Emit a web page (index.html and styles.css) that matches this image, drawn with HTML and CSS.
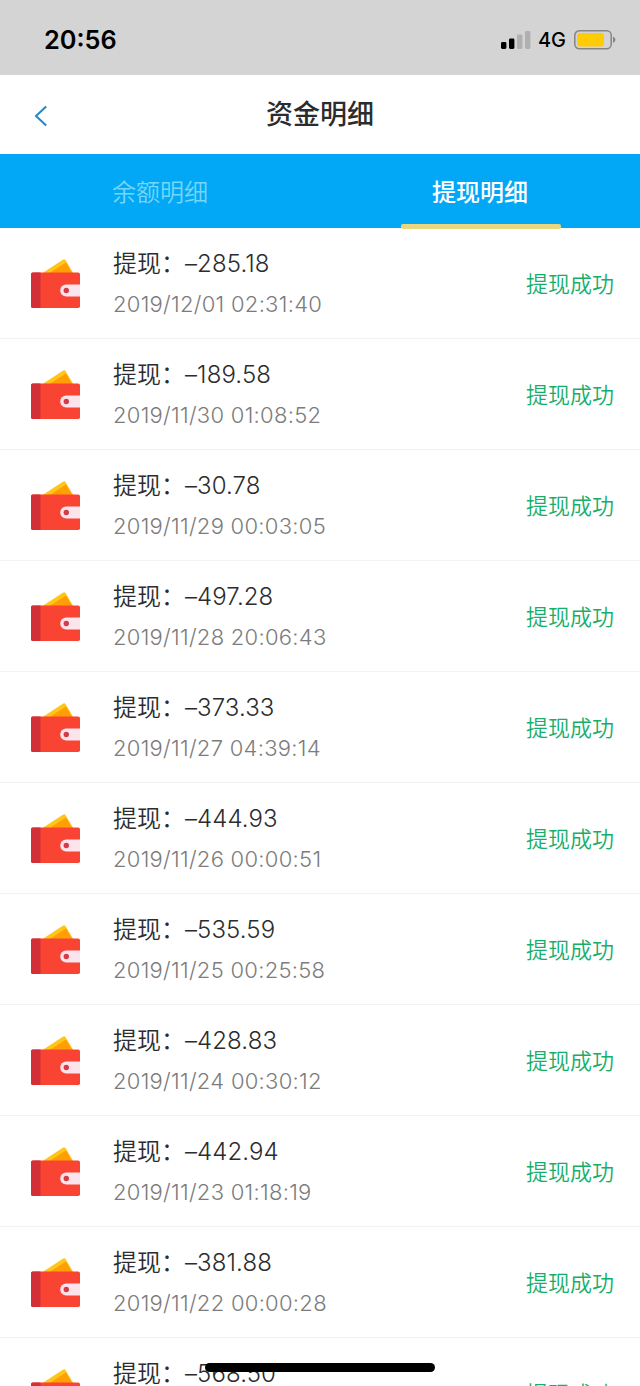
FILE: index.html
```html
<!DOCTYPE html>
<html lang="zh-CN">
<head>
  <meta charset="UTF-8"/>
  <meta name="viewport" content="width=device-width,initial-scale=1.0"/>
  <title>资金明细</title>
  <link rel="stylesheet" href="styles.css">
</head>
<body>
  <svg width="0" height="0" class="defs">
    <symbol id="wallet" viewBox="0 0 50 50">
      <path d="M10 15 L31.8 .7 Q33.6 -.4 34.8 1.4 L42.8 15 Z" fill="#ffc61a"/>
      <path d="M17 15 L35 3.4 L41.8 15 Z" fill="#ff9f05"/>
      <rect x="0" y="13.5" width="49" height="35.5" rx="1.8" fill="#f94434"/>
      <path d="M1.8 13.5 H9.5 V49 H1.8 Q0 49 0 47.2 V15.3 Q0 13.5 1.8 13.5 Z" fill="#d32f37"/>
      <path d="M49 25.5 H35.2 A6 6 0 0 0 35.2 37.5 H49 Z" fill="#fce4ec"/>
      <circle cx="35.3" cy="31.5" r="2.7" fill="#d63a45"/>
    </symbol>
  </svg>

  <div class="status-bar">
    <span class="time">20:56</span>
    <div class="status-icons">
      <svg class="signal" width="30" height="18" viewBox="0 0 30 18">
        <rect x="0" y="11" width="5.4" height="7" rx="1.4"/>
        <rect x="8" y="7.5" width="5.4" height="10.5" rx="1.4"/>
        <rect x="16" y="3.5" width="5.4" height="14.5" rx="1.4" fill="#b0b0b0"/>
        <rect x="24" y="0" width="5.4" height="18" rx="1.4" fill="#b0b0b0"/>
      </svg>
      <span class="network">4G</span>
      <svg class="battery" width="42" height="20" viewBox="0 0 42 20">
        <rect x=".8" y=".8" width="36.4" height="18" rx="4.5" fill="none" stroke="#858585" stroke-width="1.5"/>
        <rect x="3" y="3" width="27" height="13.6" rx="2.5" fill="#ffcb05"/>
        <path d="M39 6.5 Q41.5 7.8 41.5 9.8 T39 13.1 Z" fill="#858585"/>
      </svg>
    </div>
  </div>

  <div class="nav">
    <svg class="back" width="14" height="22" viewBox="0 0 14 22">
      <path d="M12.2 1.5 L2 11 L12.2 20.5" fill="none" stroke="#2486c8" stroke-width="2"/>
    </svg>
    <h1>资金明细</h1>
  </div>

  <div class="tabs">
    <div class="tab">余额明细</div>
    <div class="tab active">提现明细</div>
  </div>

  <div class="list" id="list"></div>

  <div class="home-bar"></div>

  <script>
    const records = [
      ['285.18', '2019/12/01 02:31:40'],
      ['189.58', '2019/11/30 01:08:52'],
      ['30.78', '2019/11/29 00:03:05'],
      ['497.28', '2019/11/28 20:06:43'],
      ['373.33', '2019/11/27 04:39:14'],
      ['444.93', '2019/11/26 00:00:51'],
      ['535.59', '2019/11/25 00:25:58'],
      ['428.83', '2019/11/24 00:30:12'],
      ['442.94', '2019/11/23 01:18:19'],
      ['381.88', '2019/11/22 00:00:28'],
      ['568.50', '']
    ];

    document.getElementById('list').innerHTML = records.map(([amount, date]) => `
      <div class="item">
        <svg class="icon"><use href="#wallet"/></svg>
        <div class="info">
          <div class="amount">提现：<span class="num">–${amount}</span></div>
          <div class="date">${date}</div>
        </div>
        <div class="state">提现成功</div>
      </div>`).join('');
  </script>
</body>
</html>
```
FILE: styles.css
```css
body {
  margin: 0;
  height: 1386px;
  overflow: hidden;
  background: #fff;
  color: #2c2c2e;
  font-family: Inter, "Noto Sans CJK SC", sans-serif;
}
.defs { position: absolute; }

.status-bar {
  display: flex;
  justify-content: space-between;
  align-items: center;
  box-sizing: border-box;
  height: 75px;
  padding: 4px 24px 0 44px;
  background: #d4d4d4;
  color: #000;
}
.time { font-size: 25.3px; font-weight: 600; }
.status-icons { display: flex; align-items: center; }
.network { margin: 0 8px 0 7px; font-size: 20px; font-weight: 500; }

.nav {
  display: grid;
  grid-template-columns: 34px 1fr 34px;
  align-items: center;
  height: 79px;
}
.back { margin: 3px 0 0 34px; }
.nav h1 {
  margin: 0;
  font-size: 27px;
  line-height: 40px;
  font-weight: 500;
  text-align: center;
}

.tabs {
  display: flex;
  height: 74px;
  background: #02a8f5;
}
.tab {
  flex: 1;
  font-size: 24px;
  font-weight: 350;
  line-height: 77px;
  text-align: center;
  color: #74d6f8;
}
.tab.active {
  color: #fff;
  font-weight: 500;
}
.tab.active::after {
  content: "";
  display: block;
  width: 160px;
  height: 5px;
  margin: -7px 0 0 81px;
  border-radius: 2px;
  background: #ebd680;
}

.item {
  display: flex;
  box-sizing: border-box;
  height: 111px;
  padding: 0 26px 0 31px;
  border-bottom: 1px solid #f3f3f3;
}
.icon {
  width: 50px;
  height: 50px;
  margin: 31px 32px 0 0;
}
.info { flex: 1; }
.amount {
  margin-top: 18px;
  font-size: 24px;
  line-height: 36px;
  font-weight: 350;
}
.num {
  font-weight: 330;
  letter-spacing: .1px;
}
.date {
  margin-top: 5px;
  font-size: 22px;
  line-height: 34px;
  font-weight: 300;
  letter-spacing: .28px;
  color: #7c7c7c;
}
.state {
  font-size: 22px;
  font-weight: 350;
  line-height: 112px;
  color: #17ae69;
}

.home-bar {
  position: fixed;
  left: 205px;
  bottom: 14px;
  width: 230px;
  height: 9px;
  border-radius: 5px;
  background: #000;
}
```
